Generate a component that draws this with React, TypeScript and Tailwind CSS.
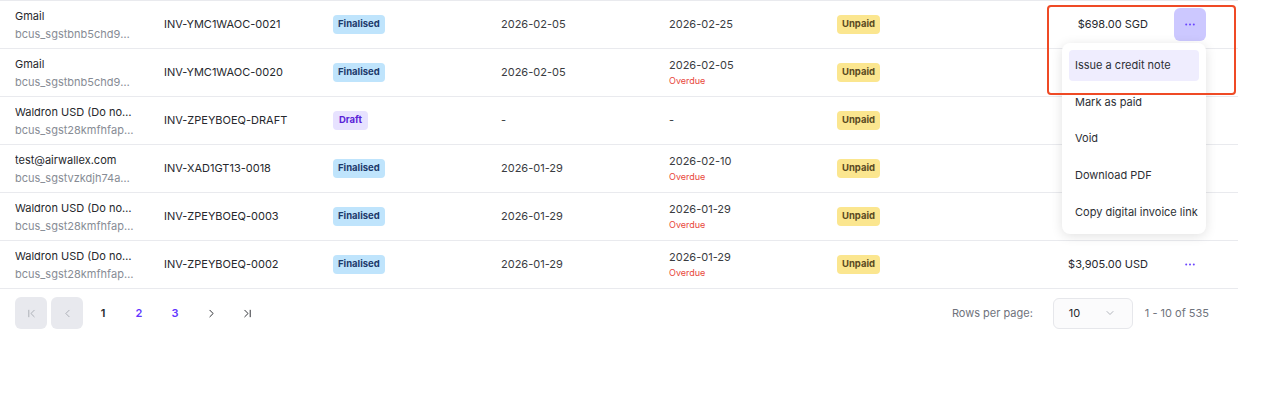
import { ChevronFirst, ChevronLeft, ChevronRight, ChevronLast, ChevronDown } from 'lucide-react';

type Row = {
  name: string;
  id: string;
  invoice: string;
  status: 'Finalised' | 'Draft';
  issued: string;
  due: string;
  overdue?: boolean;
  amount?: string;
};

const rows: Row[] = [
  { name: 'Gmail', id: 'bcus_sgstbnb5chd9wxq2k1', invoice: 'INV-YMC1WAOC-0021', status: 'Finalised', issued: '2026-02-05', due: '2026-02-25', amount: '$698.00 SGD' },
  { name: 'Gmail', id: 'bcus_sgstbnb5chd9wxq2k1', invoice: 'INV-YMC1WAOC-0020', status: 'Finalised', issued: '2026-02-05', due: '2026-02-05', overdue: true },
  { name: 'Waldron USD (Do not touch)', id: 'bcus_sgst28kmfhfapjo9rt', invoice: 'INV-ZPEYBOEQ-DRAFT', status: 'Draft', issued: '-', due: '-' },
  { name: 'test@airwallex.com', id: 'bcus_sgstvzkdjh74aerfq1', invoice: 'INV-XAD1GT13-0018', status: 'Finalised', issued: '2026-01-29', due: '2026-02-10', overdue: true },
  { name: 'Waldron USD (Do not touch)', id: 'bcus_sgst28kmfhfapjo9rt', invoice: 'INV-ZPEYBOEQ-0003', status: 'Finalised', issued: '2026-01-29', due: '2026-01-29', overdue: true },
  { name: 'Waldron USD (Do not touch)', id: 'bcus_sgst28kmfhfapjo9rt', invoice: 'INV-ZPEYBOEQ-0002', status: 'Finalised', issued: '2026-01-29', due: '2026-01-29', overdue: true, amount: '$3,905.00 USD' },
];

const menuItems = ['Issue a credit note', 'Mark as paid', 'Void', 'Download PDF', 'Copy digital invoice link'];

function Dots() {
  return (
    <svg width="10" height="3" viewBox="0 0 10 3" fill="#6a45ff">
      <circle cx="1.2" cy="1.5" r="1" />
      <circle cx="5" cy="1.5" r="1" />
      <circle cx="8.8" cy="1.5" r="1" />
    </svg>
  );
}

function StatusBadge({ status }: { status: Row['status'] }) {
  if (status === 'Draft') {
    return <span className="inline-flex h-[19px] items-center rounded-[4px] bg-[#e7e2ff] px-[6px] text-[9.5px] font-bold text-[#5a22d8]">Draft</span>;
  }
  return <span className="inline-flex h-[19px] items-center rounded-[4px] bg-[#bfe4fc] px-[5px] text-[9.5px] font-bold text-[#1d3a6b]">Finalised</span>;
}

export default function App() {
  return (
    <div className="h-[411px] w-[1265px] bg-white text-[#26282d]" style={{ fontFamily: 'Inter, "Noto Sans", sans-serif' }}>
      <div className="relative w-[1238px]">
        <div className="border-t border-[#e9eaee]">
          {rows.map((row, i) => (
            <div key={i} className="flex h-[48px] items-center border-b border-[#e9eaee] text-[11px]">
              <div className="w-[149px] pl-[15px] pr-[14px] leading-[18px]">
                <div className="truncate">{row.name}</div>
                <div className="truncate text-[#878c95]">{row.id}</div>
              </div>
              <div className="w-[169px] pl-[15px]">{row.invoice}</div>
              <div className="w-[168px] pl-[15px]">
                <StatusBadge status={row.status} />
              </div>
              <div className="w-[168px] pl-[15px] text-[#3a3c41]">{row.issued}</div>
              <div className="w-[168px] pl-[15px] text-[#3a3c41]">
                <div className="leading-[17px]">{row.due}</div>
                {row.overdue && <div className="text-[9px] leading-[14px] text-[#e8453a]">Overdue</div>}
              </div>
              <div className="w-[168px] pl-[15px]">
                <span className="inline-flex h-[19px] items-center rounded-[4px] bg-[#fbe68f] px-[5px] text-[9.5px] font-bold text-[#5a4a1f]">Unpaid</span>
              </div>
              <div className="flex-1 pr-[12px] text-right">{row.amount}</div>
              <div className="w-[78px] pl-[14px]">
                {row.amount && (
                  <button className={`flex h-[33px] w-[32px] items-center justify-center rounded-[6px] ${i === 0 ? 'bg-[#ccc8ff]' : ''}`}>
                    <Dots />
                  </button>
                )}
              </div>
            </div>
          ))}
        </div>

        <div className="flex h-[48px] items-center justify-between pl-[15px] pr-[29px]">
          <div className="flex items-center gap-1">
            <button className="flex h-8 w-8 items-center justify-center rounded-[6px] bg-[#e8e9ee] text-[#9a9ea7]">
              <ChevronFirst size={13} strokeWidth={1.4} />
            </button>
            <button className="flex h-8 w-8 items-center justify-center rounded-[6px] bg-[#e8e9ee] text-[#9a9ea7]">
              <ChevronLeft size={13} strokeWidth={1.4} />
            </button>
            <button className="flex h-8 w-8 items-center justify-center text-[11px] font-semibold text-[#26282d]">1</button>
            <button className="flex h-8 w-8 items-center justify-center text-[11px] font-semibold text-[#6236ff]">2</button>
            <button className="flex h-8 w-8 items-center justify-center text-[11px] font-semibold text-[#6236ff]">3</button>
            <button className="flex h-8 w-8 items-center justify-center text-[#26282d]">
              <ChevronRight size={13} strokeWidth={1.75} />
            </button>
            <button className="flex h-8 w-8 items-center justify-center text-[#26282d]">
              <ChevronLast size={13} strokeWidth={1.75} />
            </button>
          </div>
          <div className="flex items-center text-[11px] text-[#6f737c]">
            <span>Rows per page:</span>
            <div className="ml-[20px] flex h-[31px] w-[80px] items-center justify-between rounded-[6px] border border-[#e6e7eb] bg-[#fbfbfc] pl-[15px] pr-[16px] text-[#26282d]">
              <span>10</span>
              <ChevronDown size={12} strokeWidth={1.5} className="text-[#9a9ea7]" />
            </div>
            <span className="ml-[12px]">1 - 10 of 535</span>
          </div>
        </div>

        <div className="absolute left-[1062px] top-[43px] flex w-[144px] flex-col gap-[5.6px] rounded-[8px] bg-white p-[7px] shadow-[0_2px_12px_rgba(0,0,0,0.12)]">
          {menuItems.map((item, i) => (
            <div key={item} className={`flex h-[31px] items-center rounded-[4px] px-[6px] text-[11px] whitespace-nowrap text-[#2c2f35] ${i === 0 ? 'bg-[#efedfe]' : ''}`}>
              {item}
            </div>
          ))}
        </div>

        <div className="pointer-events-none absolute left-[1047px] top-[5px] h-[90px] w-[189px] rounded-[4px] border-2 border-[#ef4a25]" />
      </div>
    </div>
  );
}
